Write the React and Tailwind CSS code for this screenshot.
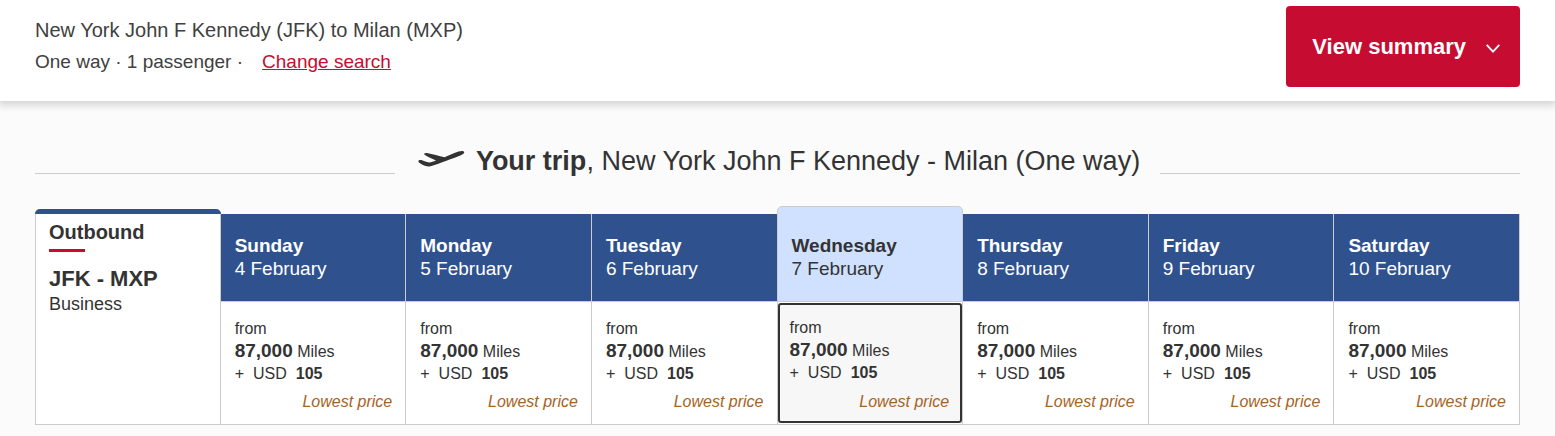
import React, { useState } from 'react';

const days = [
    { name: 'Sunday', date: '4 February' },
    { name: 'Monday', date: '5 February' },
    { name: 'Tuesday', date: '6 February' },
    { name: 'Wednesday', date: '7 February' },
    { name: 'Thursday', date: '8 February' },
    { name: 'Friday', date: '9 February' },
    { name: 'Saturday', date: '10 February' },
].map(day => ({ ...day, miles: '87,000', tax: '105' }));

const PlaneIcon = () => (
    <svg viewBox="0 0 47 17" className="w-[47px] h-[17px] mb-[5px] shrink-0" fill="#333333" aria-hidden="true">
        <path d="M.4 11.200C.2 10.200 2.400 9.800 4.600 10.400C7 11.200 9.200 12.100 11.200 12.500C13 12.600 15.500 11.500 18 10.500C14 8.600 8.500 6.300 6.500 4.800C5.500 3.600 7 2.800 9 3C14.500 3.900 21 6.200 26.500 7.200C31 5.600 36 3.300 40.500 1.600C43 .7 45.800.6 46.200 2.100C46.600 3.800 43.500 5.200 41 6.100C35.500 8.300 29 10.600 23.500 12.600C19.500 14.200 15 16 11.500 16.400C9 16.600 5.500 15.500 3.200 14.100C1.500 13 .5 12.200.4 11.200Z" />
    </svg>
);

const SummaryBar = () => (
    <header className="relative bg-white flex justify-between items-start px-[35px] pt-[6px] pb-[14px] shadow-[0_2px_8px_2px_rgba(0,0,0,0.16)]">
        <div className="pt-[9px] leading-[31px] text-[#404040]">
            <p className="text-[20px]">New York John F Kennedy (JFK) to Milan (MXP)</p>
            <p className="text-[19px]">
                One way · 1 passenger ·
                <a href="#search" className="ml-[19px] text-[#c60c30] underline">Change search</a>
            </p>
        </div>
        <button className="h-[81px] pl-[26px] pr-5 flex items-center gap-5 rounded bg-[#c60c30] text-white text-[22px] font-bold">
            View summary
            <svg viewBox="0 0 14 9" className="w-[14px] h-[9px] mt-[3px]" fill="none" stroke="currentColor" strokeWidth="1.8" aria-hidden="true">
                <path d="M.7 .9L7 7.600L13.300 .9" />
            </svg>
        </button>
    </header>
);

const DayHeader = ({ day, selected }) => (
    <th scope="col" className="p-0 align-bottom text-left font-normal">
        <div
            className={`flex flex-col justify-end pb-[21px] text-[19px] leading-[23px] border-b border-r border-[#cccccc] ${selected
                ? 'h-[96px] -ml-px pl-[14px] rounded-t-[5px] border-t border-l bg-[#d0e1ff] text-[#333333]'
                : 'h-[88px] pl-[14px] bg-[#2f528f] text-white'}`}
        >
            <strong>{day.name}</strong>
            <span>{day.date}</span>
        </div>
    </th>
);

const FareCell = ({ day, selected, onSelect }) => (
    <td className="px-0 py-px h-[123px] border-r border-b border-[#cccccc] bg-white">
        <button
            onClick={onSelect}
            aria-pressed={selected}
            className={`w-full h-[120px] flex flex-col text-left text-[16px] leading-[22px] text-[#333333] ${selected
                ? 'border-2 border-[#333333] rounded-[3px] bg-[#f7f7f7] pl-[10px] pr-[11px] pt-[12px]'
                : 'pl-[14px] pr-[13px] pt-[15px]'}`}
        >
            <span>from</span>
            <span><strong className="text-[19px]">{day.miles}</strong> Miles</span>
            <span className="flex gap-[9px]">+ <span>USD</span> <strong>{day.tax}</strong></span>
            <em className={`self-end text-[#a8631e] ${selected ? 'mt-[7px]' : 'mt-[6px]'}`}>Lowest price</em>
        </button>
    </td>
);

const App = () => {
    const [selected, setSelected] = useState(3);

    return (
        <div className="min-h-screen bg-[#fbfbfb] text-[#333333] font-['Liberation_Sans',Arial,sans-serif]">
            <SummaryBar />

            <main className="px-[35px] pt-[43px] pb-[11px]">
                <h2 className="flex items-end text-[27px] leading-[34px]">
                    <span className="flex-1 border-b border-[#cccccc] mb-[4px]"></span>
                    <span className="flex items-center gap-[11px] pl-[23px] pr-5">
                        <PlaneIcon />
                        <span><strong>Your trip</strong>, New York John F Kennedy - Milan (One way)</span>
                    </span>
                    <span className="flex-1 border-b border-[#cccccc] mb-[4px]"></span>
                </h2>

                <table className="mt-[28px] w-full table-fixed border-separate border-spacing-0">
                    <tbody>
                        <tr>
                            <th scope="rowgroup" rowSpan={2} className="p-0 align-bottom text-left">
                                <div className="h-[216px] bg-white border-x border-b border-[#cccccc] rounded-t-[5px]">
                                    <div className="-mx-px h-[5px] rounded-t-[5px] bg-[#2f528f]"></div>
                                    <div className="px-[13px] pt-[7px]">
                                        <p className="text-[20px] leading-[23px]">Outbound</p>
                                        <div className="mt-[5px] w-9 h-[3px] bg-[#c60c30]"></div>
                                        <p className="mt-[14px] text-[22px] leading-[26px]">JFK - MXP</p>
                                        <p className="text-[18px] leading-[24px] font-normal">Business</p>
                                    </div>
                                </div>
                            </th>
                            {days.map((day, i) => (
                                <DayHeader key={day.name} day={day} selected={i === selected} />
                            ))}
                        </tr>
                        <tr>
                            {days.map((day, i) => (
                                <FareCell key={day.name} day={day} selected={i === selected} onSelect={() => setSelected(i)} />
                            ))}
                        </tr>
                    </tbody>
                </table>
            </main>
        </div>
    );
};

export default App;
